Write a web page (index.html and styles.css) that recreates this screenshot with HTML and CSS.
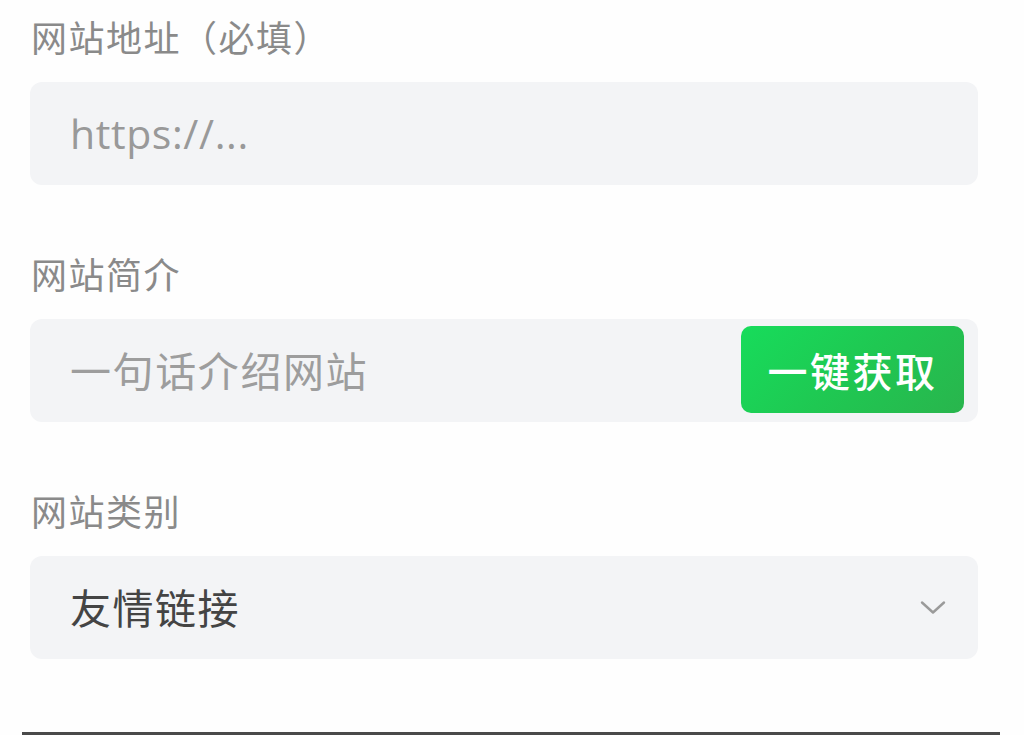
FILE: index.html
```html
<!DOCTYPE html>
<html lang="zh-CN">
<head>
<meta charset="utf-8">
<link rel="stylesheet" href="styles.css">
</head>
<body>
<div class="page">
  <div class="field">
    <div class="label">网站地址（必填）</div>
    <div class="box"><span class="placeholder latin">https://...</span></div>
  </div>
  <div class="field">
    <div class="label">网站简介</div>
    <div class="box box-btn">
      <span class="placeholder">一句话介绍网站</span>
      <button class="fetch">一键获取</button>
    </div>
  </div>
  <div class="field">
    <div class="label">网站类别</div>
    <div class="box">
      <span class="value">友情链接</span>
      <svg class="chev" width="26" height="15" viewBox="0 0 26 15"><path d="M2 2.5 L13 12.5 L24 2.5" fill="none" stroke="#9a9a9a" stroke-width="2.4" stroke-linecap="round" stroke-linejoin="round"/></svg>
    </div>
  </div>
</div>
<div class="edge"></div>
</body>
</html>
```
FILE: styles.css
```css
html, body {
  margin: 0;
  padding: 0;
  background: #fefefe;
  overflow: hidden;
  height: 735px;
}
body {
  font-family: "Noto Sans CJK SC", "Noto Sans", sans-serif;
  position: relative;
}
.page {
  padding: 12px 46px 0 30px;
  display: flex;
  flex-direction: column;
  gap: 64px;
}
.field {
  display: flex;
  flex-direction: column;
  gap: 22px;
}
.label {
  font-size: 36px;
  line-height: 48px;
  color: #8a8a8a;
  padding-left: 1px;
  letter-spacing: 1.5px;
}
.box {
  height: 103px;
  background: #f3f4f6;
  border-radius: 12px;
  display: flex;
  align-items: center;
  justify-content: space-between;
  padding: 0 32px 0 40px;
  box-sizing: border-box;
}
.box-btn {
  padding-right: 14px;
  align-items: stretch;
}
.box-btn .placeholder {
  align-self: center;
  margin-top: -4px;
}
.placeholder {
  font-size: 41px;
  color: #9d9d9d;
  letter-spacing: 1.6px;
}
.latin {
  font-family: "Open Sans", "Noto Sans", sans-serif;
  font-size: 41px;
  letter-spacing: 0.6px;
  color: #999;
  margin-top: -2px;
}
.value {
  font-size: 41px;
  color: #444;
  letter-spacing: 1.5px;
  margin-top: -4px;
}
.fetch {
  margin: 7px 0 9px;
  width: 223px;
  border: none;
  border-radius: 10px;
  background: linear-gradient(135deg, #17dc5b 0%, #1fc852 50%, #29b54d 100%);
  color: #fff;
  font-family: "Noto Sans CJK SC", sans-serif;
  font-size: 40px;
  font-weight: 500;
  letter-spacing: 2.5px;
  padding: 0;
}
.chev {
  display: block;
}
.edge {
  position: absolute;
  left: 22px;
  right: 24px;
  bottom: 0;
  height: 3px;
  background: #4a4a4a;
}
```
